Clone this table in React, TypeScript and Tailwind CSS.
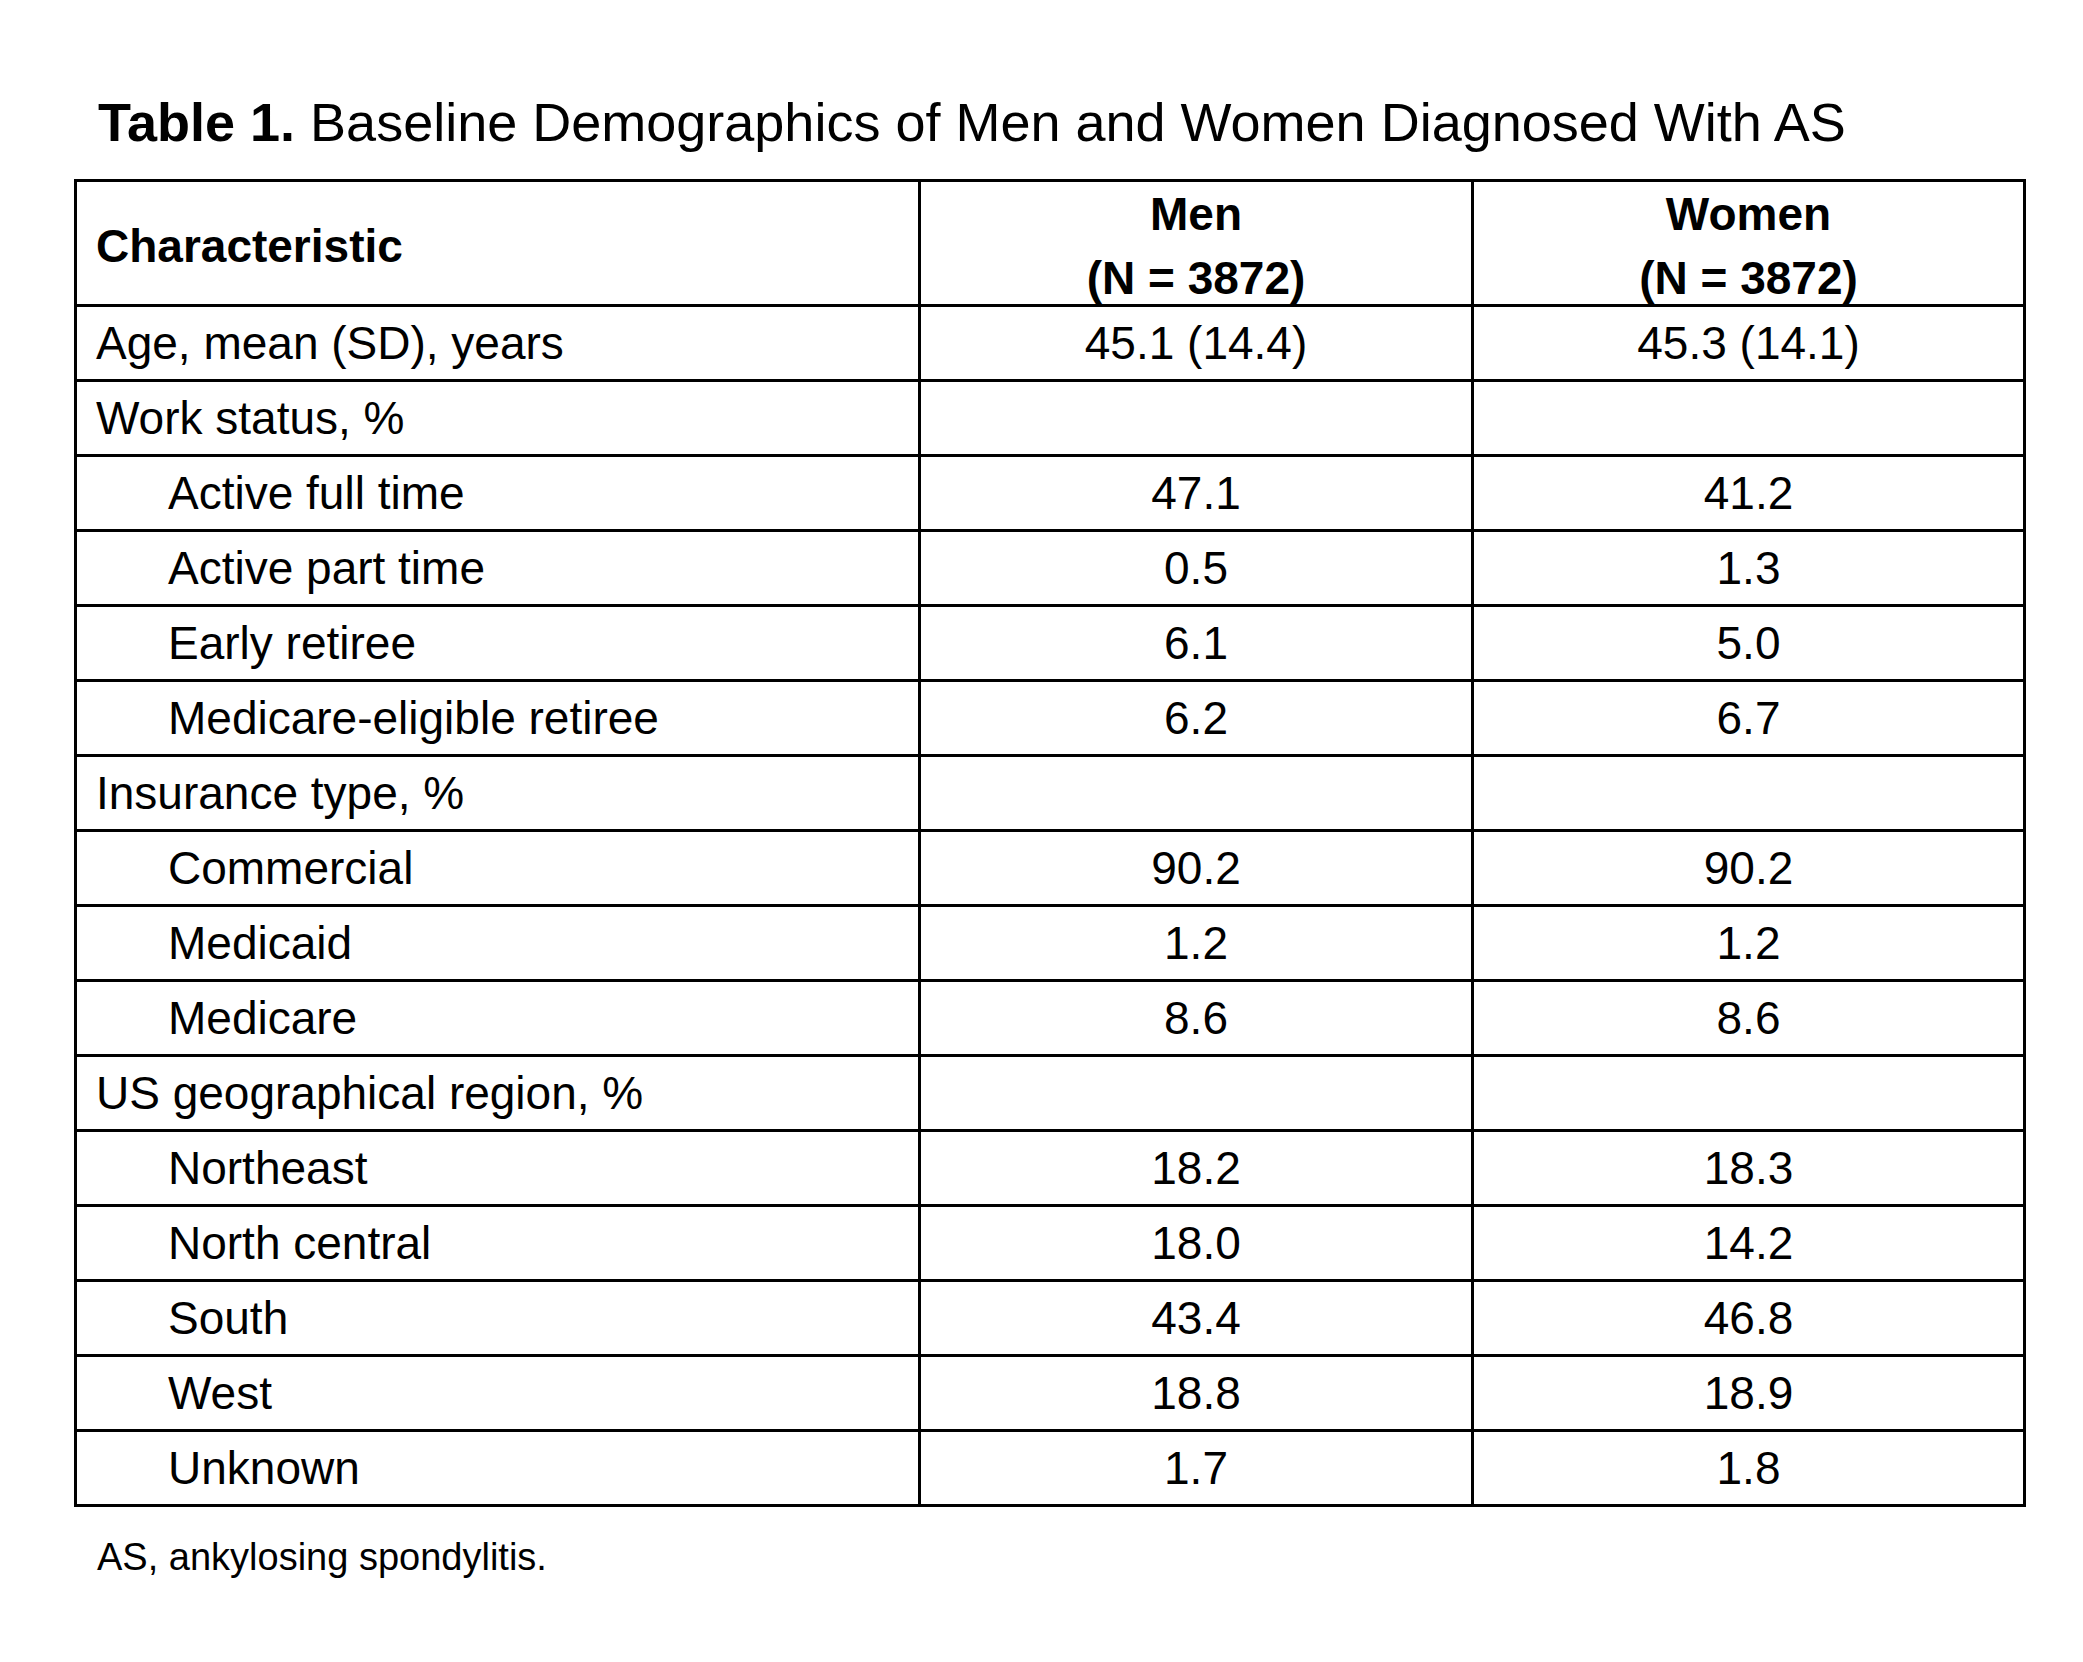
type Row = { label: string; men: string; women: string; sub?: boolean }

const rows: Row[] = [
    { label: "Age, mean (SD), years", men: "45.1 (14.4)", women: "45.3 (14.1)" },
    { label: "Work status, %", men: "", women: "" },
    { label: "Active full time", men: "47.1", women: "41.2", sub: true },
    { label: "Active part time", men: "0.5", women: "1.3", sub: true },
    { label: "Early retiree", men: "6.1", women: "5.0", sub: true },
    { label: "Medicare-eligible retiree", men: "6.2", women: "6.7", sub: true },
    { label: "Insurance type, %", men: "", women: "" },
    { label: "Commercial", men: "90.2", women: "90.2", sub: true },
    { label: "Medicaid", men: "1.2", women: "1.2", sub: true },
    { label: "Medicare", men: "8.6", women: "8.6", sub: true },
    { label: "US geographical region, %", men: "", women: "" },
    { label: "Northeast", men: "18.2", women: "18.3", sub: true },
    { label: "North central", men: "18.0", women: "14.2", sub: true },
    { label: "South", men: "43.4", women: "46.8", sub: true },
    { label: "West", men: "18.8", women: "18.9", sub: true },
    { label: "Unknown", men: "1.7", women: "1.8", sub: true },
]

const grid = "grid grid-cols-[841px_553px_552px]"

export default function App() {
    return (
        <div className="min-h-[1662px] w-[2083px] bg-white text-black font-['Liberation_Sans',Arial,sans-serif]">
            <div className="pt-[95px] pl-[98px] text-[54px] leading-[54px] whitespace-nowrap">
                <span className="font-bold">Table 1.</span> Baseline Demographics of Men and Women Diagnosed With AS
            </div>

            <div className="ml-[74px] mt-[30px] w-[1952px] border-[3px] border-black text-[46px]">
                {/* header */}
                <div className={grid + " h-[122px] font-bold"}>
                    <div className="flex items-center pl-[19px]">Characteristic</div>
                    <div className="flex flex-col items-center justify-center border-l-[3px] border-black leading-[64px]">
                        <span>Men</span>
                        <span>(N = 3872)</span>
                    </div>
                    <div className="flex flex-col items-center justify-center border-l-[3px] border-black leading-[64px]">
                        <span>Women</span>
                        <span>(N = 3872)</span>
                    </div>
                </div>

                {rows.map((r, i) => (
                    <div key={i} className={grid + " h-[75px] border-t-[3px] border-black"}>
                        <div className={"flex items-center whitespace-nowrap " + (r.sub ? "pl-[91px]" : "pl-[19px]")}>
                            {r.label}
                        </div>
                        <div className="flex items-center justify-center border-l-[3px] border-black">{r.men}</div>
                        <div className="flex items-center justify-center border-l-[3px] border-black">{r.women}</div>
                    </div>
                ))}
            </div>

            <div className="mt-[31px] pl-[97px] text-[38px] leading-[38px]">AS, ankylosing spondylitis.</div>
        </div>
    )
}
